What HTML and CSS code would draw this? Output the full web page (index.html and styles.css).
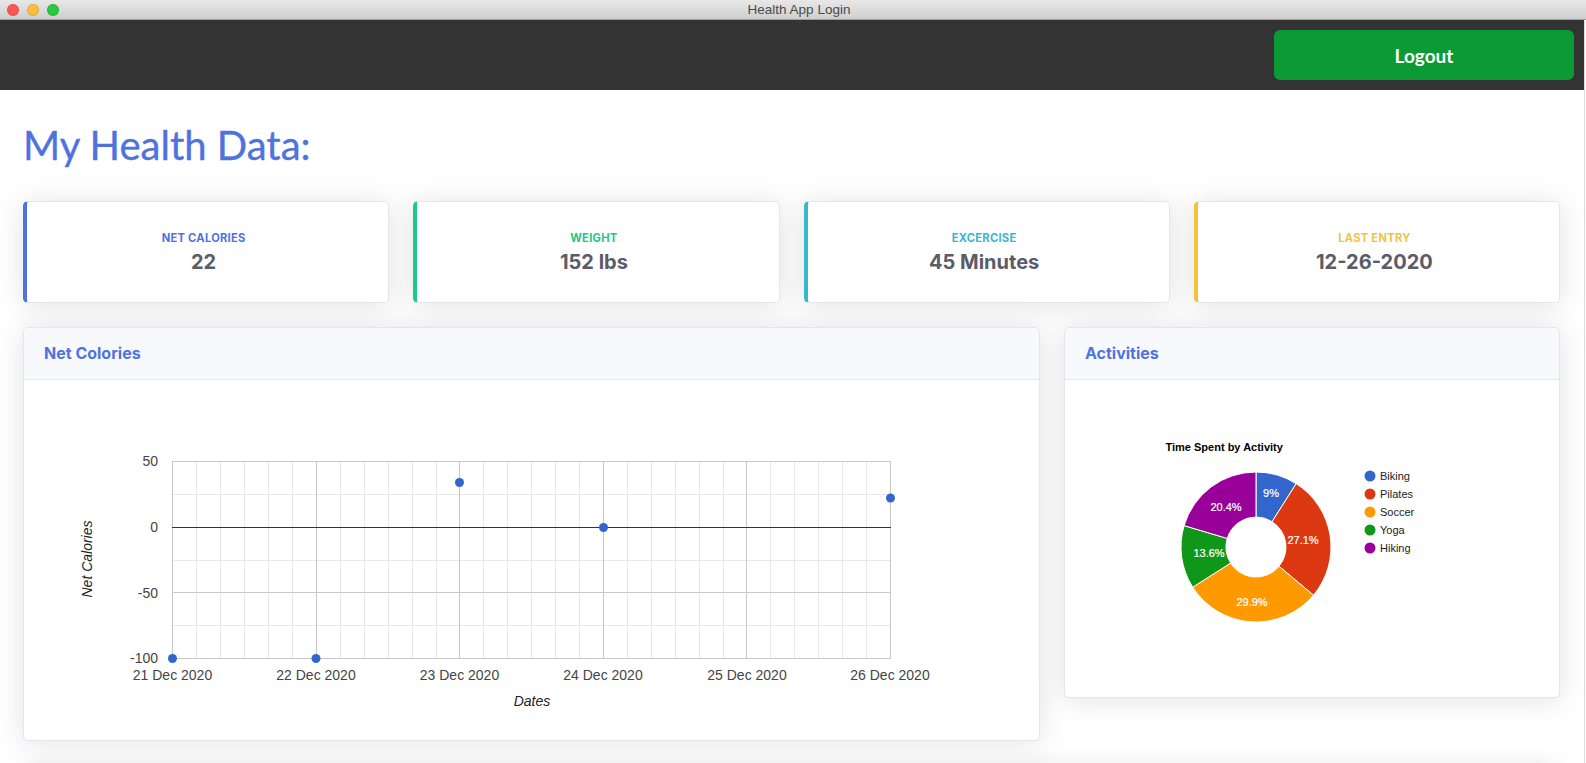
FILE: index.html
```html
<!DOCTYPE html>
<html lang="en">
<head>
<meta charset="utf-8">
<title>Health App Login</title>
<link rel="stylesheet" href="styles.css">
</head>
<body>
<header class="titlebar">
  <div class="lights"><span class="light red"></span><span class="light amber"></span><span class="light green"></span></div>
  <div class="window-title">Health App Login</div>
  <div class="titlebar-spacer"></div>
</header>
<div class="page">
  <nav class="nav"><button class="logout" type="button">Logout</button></nav>
  <main class="content">
    <h1 class="heading">My Health Data:</h1>
    <section class="stats">
      <article class="stat stat-blue"><div class="stat-inner"><div class="stat-label">Net Calories</div><div class="stat-value">22</div></div></article>
      <article class="stat stat-green"><div class="stat-inner"><div class="stat-label">Weight</div><div class="stat-value">152 lbs</div></div></article>
      <article class="stat stat-cyan"><div class="stat-inner"><div class="stat-label">Excercise</div><div class="stat-value">45 Minutes</div></div></article>
      <article class="stat stat-yellow"><div class="stat-inner"><div class="stat-label">Last Entry</div><div class="stat-value">12-26-2020</div></div></article>
    </section>
    <section class="panels">
      <article class="panel panel-line">
        <h2 class="panel-head">Net Colories</h2>
        <svg class="chart chart-line" viewBox="24 380 1015 360" width="1015" height="360">
          <path class="grid-minor" d="M196.5 461V658M220.5 461V658M244.5 461V658M268.5 461V658M292.5 461V658M340.5 461V658M364.5 461V658M388.5 461V658M412.5 461V658M436.5 461V658M483.5 461V658M507.5 461V658M531.5 461V658M555.5 461V658M579.5 461V658M627.5 461V658M651.5 461V658M675.5 461V658M699.5 461V658M723.5 461V658M770.5 461V658M794.5 461V658M818.5 461V658M842.5 461V658M866.5 461V658M172 494.5H890M172 560.5H890M172 625.5H890"/>
          <path class="grid-major" d="M172.5 461V658M316.5 461V658M459.5 461V658M603.5 461V658M746.5 461V658M890.5 461V658M172 461.5H891M172 592.5H891M172 658.5H891"/>
          <path class="grid-zero" d="M172 527.5H891"/>
          <g class="tick tick-y">
            <text x="158" y="466">50</text>
            <text x="158" y="532">0</text>
            <text x="158" y="598">-50</text>
            <text x="158" y="663">-100</text>
          </g>
          <g class="tick tick-x">
            <text x="172.5" y="680">21 Dec 2020</text>
            <text x="316" y="680">22 Dec 2020</text>
            <text x="459.5" y="680">23 Dec 2020</text>
            <text x="603" y="680">24 Dec 2020</text>
            <text x="747" y="680">25 Dec 2020</text>
            <text x="890" y="680">26 Dec 2020</text>
          </g>
          <text class="axis-title" x="532" y="705.5">Dates</text>
          <text class="axis-title" transform="translate(92 559) rotate(-90)">Net Calories</text>
          <g class="points">
            <circle cx="172.5" cy="658.5" r="4.5"/>
            <circle cx="316" cy="658.5" r="4.5"/>
            <circle cx="459.5" cy="482.5" r="4.5"/>
            <circle cx="603.5" cy="527.5" r="4.5"/>
            <circle cx="890.5" cy="498" r="4.5"/>
          </g>
        </svg>
      </article>
      <article class="panel panel-pie">
        <h2 class="panel-head">Activities</h2>
        <svg class="chart chart-pie" viewBox="1065 380 494 317" width="494" height="317">
          <text class="pie-title" x="1165.5" y="451">Time Spent by Activity</text>
          <g class="slices" transform="translate(1256 547)">
            <path class="s-biking" d="M0 -75A75 75 0 0 1 40.19 -63.32L16.07 -25.33A30 30 0 0 0 0 -30Z"/>
            <path class="s-pilates" d="M40.19 -63.32A75 75 0 0 1 57.48 48.18L22.99 19.27A30 30 0 0 0 16.07 -25.33Z"/>
            <path class="s-soccer" d="M57.48 48.18A75 75 0 0 1 -63.32 40.19L-25.33 16.07A30 30 0 0 0 22.99 19.27Z"/>
            <path class="s-yoga" d="M-63.32 40.19A75 75 0 0 1 -71.89 -21.38L-28.76 -8.55A30 30 0 0 0 -25.33 16.07Z"/>
            <path class="s-hiking" d="M-71.89 -21.38A75 75 0 0 1 0 -75L0 -30A30 30 0 0 0 -28.76 -8.55Z"/>
          </g>
          <g class="pie-label">
            <text x="1271" y="497">9%</text>
            <text x="1303" y="544">27.1%</text>
            <text x="1252" y="606">29.9%</text>
            <text x="1209" y="557">13.6%</text>
            <text x="1226" y="511">20.4%</text>
          </g>
          <g class="legend">
            <circle class="s-biking" cx="1370" cy="476" r="5.5"/><text x="1380" y="480">Biking</text>
            <circle class="s-pilates" cx="1370" cy="494" r="5.5"/><text x="1380" y="498">Pilates</text>
            <circle class="s-soccer" cx="1370" cy="512" r="5.5"/><text x="1380" y="516">Soccer</text>
            <circle class="s-yoga" cx="1370" cy="530" r="5.5"/><text x="1380" y="534">Yoga</text>
            <circle class="s-hiking" cx="1370" cy="548" r="5.5"/><text x="1380" y="552">Hiking</text>
          </g>
        </svg>
      </article>
    </section>
    <div class="below-fold"></div>
  </main>
</div>
</body>
</html>
```

FILE: styles.css
```css
* { box-sizing: border-box; }

html, body {
  margin: 0;
  height: 763px;
  overflow: hidden;
  background: #fff;
}

.titlebar {
  display: flex;
  align-items: center;
  height: 20px;
  background: linear-gradient(#e8e8e8, #cfcfcf);
  border-bottom: 1px solid #9f9f9f;
}

.lights {
  width: 60px;
  padding-left: 7px;
  display: flex;
  gap: 8px;
}

.light {
  width: 12px;
  height: 12px;
  border-radius: 50%;
  box-shadow: inset 0 0 0 1px rgba(0, 0, 0, .1);
}
.red { background: #fc5753; }
.amber { background: #fdbc40; }
.green { background: #28c940; }

.window-title {
  flex: 1;
  text-align: center;
  font: 13.5px "Liberation Sans", Arial, sans-serif;
  color: #4a4a4a;
}
.titlebar-spacer { width: 48px; }

.page {
  width: 1585px;
  height: 743px;
  border-right: 1px solid #dedede;
}

.nav {
  display: flex;
  justify-content: flex-end;
  height: 70px;
  padding: 10px;
  background: #333;
}

.logout {
  width: 300px;
  height: 50px;
  border: 0;
  border-radius: 6px;
  background: #0b9a33;
  color: #fff;
  font: 700 19px Lato, sans-serif;
}

.content { padding: 31px 24px 0 23px; }

.heading {
  margin: 0 0 32px;
  font: 400 40px/48px Lato, sans-serif;
  color: #4e73df;
  -webkit-text-stroke: .35px #4e73df;
}

.stats {
  display: grid;
  grid-template-columns: repeat(4, 1fr);
  gap: 24px;
}

.stat {
  display: flex;
  align-items: center;
  height: 102px;
  background: #fff;
  border: 1px solid #e3e6f0;
  border-left-width: 4px;
  border-radius: 5px;
  box-shadow: 0 2px 28px rgba(58, 59, 69, .15);
  text-align: center;
  font-family: Inter, sans-serif;
}
.stat-inner { flex: 1; margin-right: 8px; padding-top: 3px; }
.stat-blue { border-left-color: #4e73df; }
.stat-green { border-left-color: #1cc88a; }
.stat-cyan { border-left-color: #36b9cc; }
.stat-yellow { border-left-color: #f6c23e; }

.stat-label {
  font-size: 11.2px;
  font-weight: 700;
  line-height: 17px;
  letter-spacing: .25px;
  text-transform: uppercase;
}
.stat-blue .stat-label { color: #4e73df; }
.stat-green .stat-label { color: #1cc88a; }
.stat-cyan .stat-label { color: #36b9cc; }
.stat-yellow .stat-label { color: #f6c23e; }

.stat-value {
  font-size: 20px;
  font-weight: 700;
  line-height: 30px;
  color: #5a5c69;
}

.panels {
  display: grid;
  grid-template-columns: 1017px 496px;
  gap: 24px;
  align-items: start;
  margin-top: 24px;
}

.panel {
  background: #fff;
  border: 1px solid #e3e6f0;
  border-radius: 5px;
  box-shadow: 0 2px 28px rgba(58, 59, 69, .15);
  overflow: hidden;
}

.panel-head {
  margin: 0;
  height: 52px;
  padding: 0 20px;
  background: #f8f9fc;
  border-bottom: 1px solid #e3e6f0;
  font: 700 16px/51px Inter, sans-serif;
  color: #4e73df;
}

.chart { display: block; }

.grid-minor { stroke: #e8e8e8; stroke-width: 1; fill: none; }
.grid-major { stroke: #c8c8c8; stroke-width: 1; fill: none; }
.grid-zero { stroke: #333; stroke-width: 1; fill: none; }

.tick text {
  font: 14px "Liberation Sans", Arial, sans-serif;
  fill: #444;
}
.tick-y text { text-anchor: end; }
.tick-x text { text-anchor: middle; }

.axis-title {
  font: italic 14px "Liberation Sans", Arial, sans-serif;
  fill: #222;
  text-anchor: middle;
}

.points circle { fill: #3366cc; }

.pie-title {
  font: 700 11px "Liberation Sans", Arial, sans-serif;
  fill: #000;
}

.slices path { stroke: #fff; stroke-width: 1; }
.s-biking { fill: #3366cc; }
.s-pilates { fill: #dc3912; }
.s-soccer { fill: #ff9900; }
.s-yoga { fill: #109618; }
.s-hiking { fill: #990099; }

.pie-label text {
  font: 11px "Liberation Sans", Arial, sans-serif;
  fill: #fff;
  stroke: #fff;
  stroke-width: .2px;
  text-anchor: middle;
}

.legend text {
  font: 11px "Liberation Sans", Arial, sans-serif;
  fill: #222;
}

.below-fold {
  height: 22px;
  margin: 0 -10px;
  background: linear-gradient(transparent 30%, rgba(58, 59, 69, .05));
  -webkit-mask-image: linear-gradient(90deg, transparent, #000 30px, #000 calc(100% - 30px), transparent);
  mask-image: linear-gradient(90deg, transparent, #000 30px, #000 calc(100% - 30px), transparent);
}
```
